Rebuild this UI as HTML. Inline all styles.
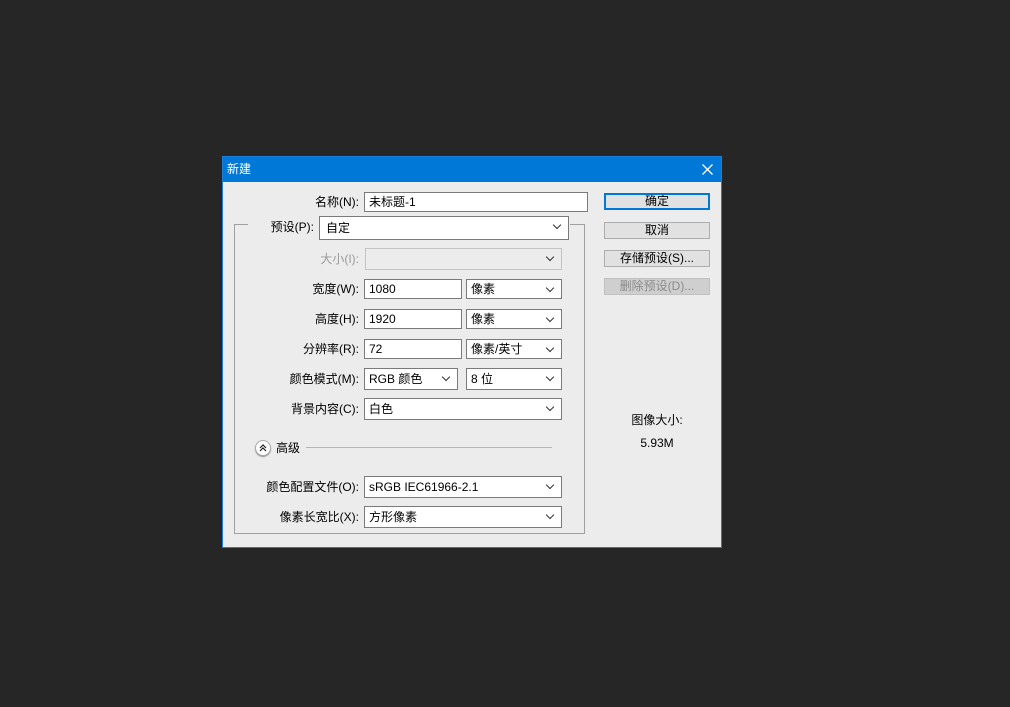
<!DOCTYPE html>
<html><head><meta charset="utf-8"><style>
body{margin:0;width:1010px;height:707px;background:#262626;position:relative;overflow:hidden;font-family:"Liberation Sans","Noto Sans CJK SC",sans-serif;font-size:12px;color:#000}
.dlg{position:absolute;left:222px;top:156px;width:498px;height:390px;border:1px solid #1a7fd8;background:#ececec}
.tb{position:absolute;left:0;top:0;width:498px;height:25px;background:#0078d7;color:#fff;font-size:12px;line-height:25px}
.w{position:absolute;left:-1px;top:-1px;width:498px;height:390px}
.a{position:absolute}
.lbl{position:absolute;text-align:right;width:200px;line-height:20px}
.in{position:absolute;background:#fff;border:1px solid #7a7a7a;box-sizing:border-box;padding-left:4px;line-height:18px;font-size:12px}
.sel::after{content:"";position:absolute;right:8px;top:5px;width:5px;height:5px;border-right:1px solid #333;border-bottom:1px solid #333;transform:rotate(45deg)}
.btn{position:absolute;left:382px;width:106px;height:17px;box-sizing:border-box;border:1px solid #adadad;background:#e1e1e1;text-align:center;line-height:15px}
</style></head><body>
<div class="dlg">
<div class="tb"><span style="margin-left:4px">新建</span>
<svg class="a" style="left:479px;top:7px" width="11" height="11"><path d="M0.5 0.5L10.5 10.5M10.5 0.5L0.5 10.5" stroke="#fff" stroke-width="1.3"/></svg></div>
<div class="w">
<div class="a" style="left:12px;top:68px;width:349px;height:309px;border:1px solid #a0a0a0;border-top:none"></div>
<div class="a" style="left:12px;top:68px;width:14px;border-top:1px solid #a0a0a0"></div>
<div class="a" style="left:348px;top:68px;width:14px;border-top:1px solid #a0a0a0"></div>

<div class="lbl" style="left:-63px;top:36px">名称(N):</div>
<div class="in" style="left:142px;top:36px;width:224px;height:20px">未标题-1</div>

<div class="lbl" style="left:-108px;top:61px">预设(P):</div>
<div class="in sel" style="left:97px;top:60px;width:250px;height:24px;line-height:22px;padding-left:6px">自定</div>

<div class="lbl" style="left:-63px;top:93px;color:#9a9a9a">大小(I):</div>
<div class="in sel" style="left:143px;top:92px;width:197px;height:22px;background:#ececec;border-color:#c4c4c4"></div>

<div class="lbl" style="left:-63px;top:123px">宽度(W):</div>
<div class="in" style="left:142px;top:123px;width:98px;height:20px">1080</div>
<div class="in sel" style="left:244px;top:123px;width:96px;height:20px">像素</div>

<div class="lbl" style="left:-63px;top:153px">高度(H):</div>
<div class="in" style="left:142px;top:153px;width:98px;height:20px">1920</div>
<div class="in sel" style="left:244px;top:153px;width:96px;height:20px">像素</div>

<div class="lbl" style="left:-63px;top:183px">分辨率(R):</div>
<div class="in" style="left:142px;top:183px;width:98px;height:20px">72</div>
<div class="in sel" style="left:244px;top:183px;width:96px;height:20px">像素/英寸</div>

<div class="lbl" style="left:-63px;top:213px">颜色模式(M):</div>
<div class="in sel" style="left:142px;top:212px;width:94px;height:22px;line-height:20px">RGB 颜色</div>
<div class="in sel" style="left:244px;top:212px;width:96px;height:22px;line-height:20px">8 位</div>

<div class="lbl" style="left:-63px;top:243px">背景内容(C):</div>
<div class="in sel" style="left:142px;top:242px;width:198px;height:22px;line-height:20px">白色</div>

<div class="a" style="left:33px;top:284px;width:14px;height:14px;border-radius:50%;background:#fff;border:1px solid #aaa;box-shadow:0 1px 1px #999"></div>
<svg class="a" style="left:37px;top:288px" width="8" height="8"><path d="M1 4L4 1L7 4M1 7L4 4L7 7" stroke="#222" fill="none" stroke-width="1.2"/></svg>
<div class="a" style="left:54px;top:282px;line-height:20px">高级</div>
<div class="a" style="left:84px;top:291px;width:246px;border-top:1px solid #b5b5b5"></div>

<div class="lbl" style="left:-63px;top:321px">颜色配置文件(O):</div>
<div class="in sel" style="left:142px;top:320px;width:198px;height:22px;line-height:20px">sRGB IEC61966-2.1</div>

<div class="lbl" style="left:-63px;top:351px">像素长宽比(X):</div>
<div class="in sel" style="left:142px;top:350px;width:198px;height:22px;line-height:20px">方形像素</div>

<div class="btn" style="top:37px;border:2px solid #0078d7;line-height:13px">确定</div>
<div class="btn" style="top:66px">取消</div>
<div class="btn" style="top:94px">存储预设(S)...</div>
<div class="btn" style="top:122px;color:#8a8a8a;background:#cfcfcf;border-color:#c0c0c0">删除预设(D)...</div>

<div class="a" style="left:382px;top:255px;width:106px;text-align:center">图像大小:</div>
<div class="a" style="left:382px;top:280px;width:106px;text-align:center">5.93M</div>
</div>
</div>
</body></html>
